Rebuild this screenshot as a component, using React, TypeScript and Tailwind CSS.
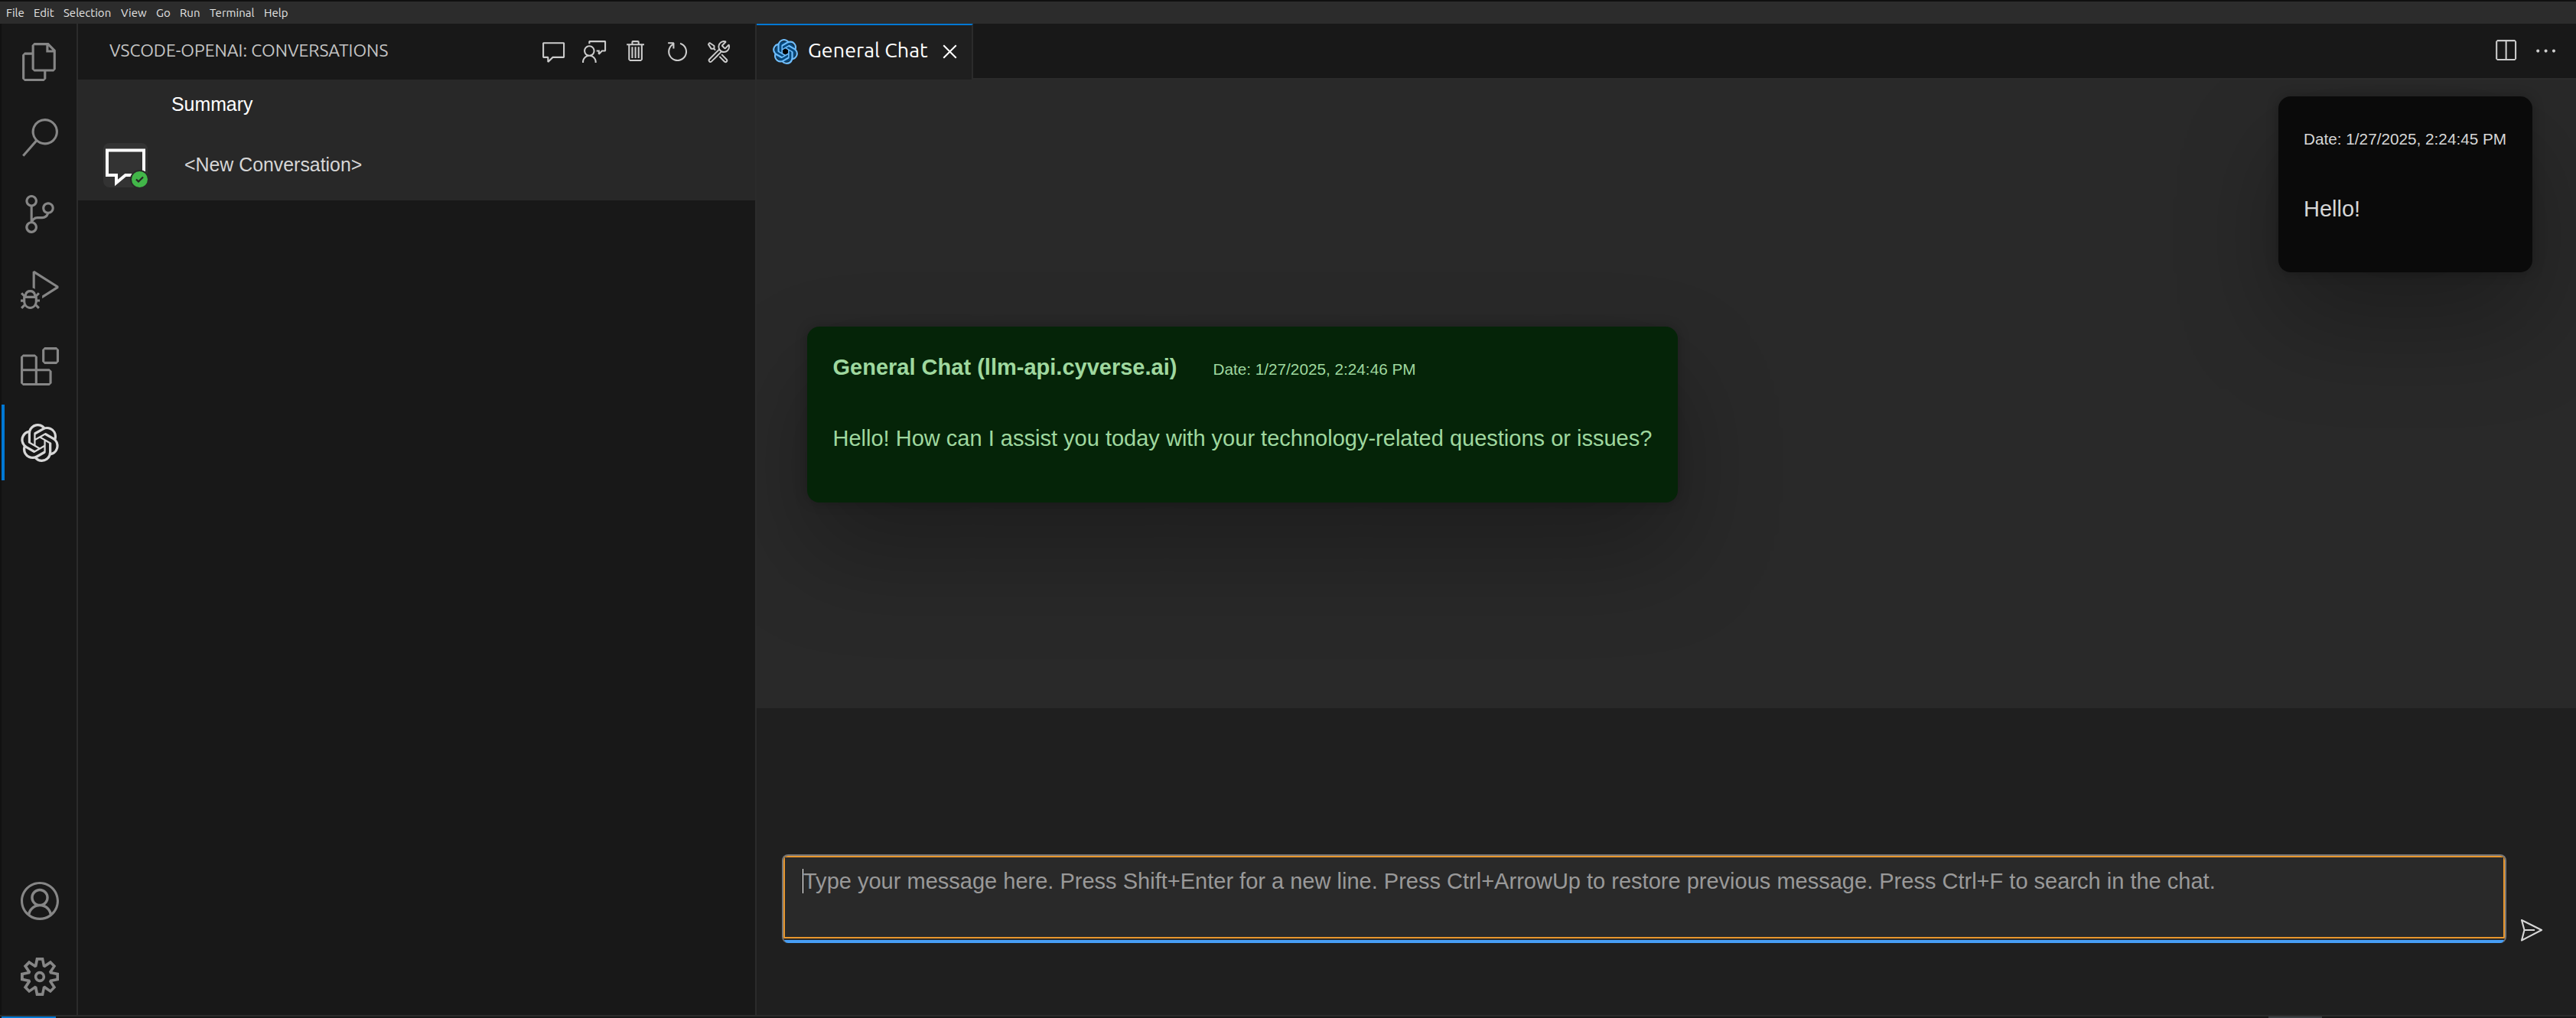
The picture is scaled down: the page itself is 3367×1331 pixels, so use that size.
import React from "react";
import {
  VscFiles, VscSearch, VscSourceControl, VscDebugAlt, VscExtensions, VscAccount, VscSettingsGear,
  VscComment, VscFeedback, VscTrash, VscRefresh, VscTools, VscSplitHorizontal, VscEllipsis, VscClose,
} from "react-icons/vsc";
import { SiOpenai } from "react-icons/si";

const ui = "font-['Ubuntu','Noto_Sans',sans-serif]";

const menus = [
  { label: "File", cls: "w-[36px]" },
  { label: "Edit", cls: "w-[39px]" },
  { label: "Selection", cls: "w-[75px]" },
  { label: "View", cls: "w-[46px]" },
  { label: "Go", cls: "w-[31px]" },
  { label: "Run", cls: "w-[39px]" },
  { label: "Terminal", cls: "w-[71px]" },
  { label: "Help", cls: "w-[40px]" },
];

function MenuBar() {
  return (
    <div className={`flex h-[31px] shrink-0 items-center border-t-2 border-[#101010] bg-[#2c2c2c] pl-2 text-[15px] text-[#e4e4e4] ${ui}`}>
      {menus.map((m) => (
        <div key={m.label} className={`${m.cls} shrink-0 whitespace-nowrap leading-none`}>{m.label}</div>
      ))}
    </div>
  );
}

function ActivityItem({ icon: Icon, active = false }: { icon: React.ElementType; active?: boolean }) {
  return (
    <div className={`flex h-[99.5px] w-full items-center justify-center ${active ? "border-l-4 border-[#0078d4] pr-[2px] pt-[2px] text-[#d7d7d7]" : "pl-[2px] text-[#868686]"}`}>
      <Icon className="size-[50px]" />
    </div>
  );
}

function ActivityBar() {
  return (
    <div className="flex w-[102px] shrink-0 flex-col justify-between border-r-2 border-l-2 border-r-[#2b2b2b] border-l-[#111] bg-[#181818]">
      <div className="flex flex-col">
        <ActivityItem icon={VscFiles} />
        <ActivityItem icon={VscSearch} />
        <ActivityItem icon={VscSourceControl} />
        <ActivityItem icon={VscDebugAlt} />
        <ActivityItem icon={VscExtensions} />
        <ActivityItem icon={SiOpenai} active />
      </div>
      <div className="flex flex-col">
        <ActivityItem icon={VscAccount} />
        <ActivityItem icon={VscSettingsGear} />
      </div>
    </div>
  );
}

function Sidebar() {
  return (
    <div className="flex w-[887px] shrink-0 flex-col border-r-2 border-[#2b2b2b] bg-[#181818]">
      <div className="flex h-[73px] shrink-0 items-center justify-between pr-[31px] pl-[41px]">
        <span className={`pb-[3px] text-[22.8px] whitespace-nowrap text-[#c4c4c4] ${ui}`}>VSCODE-OPENAI: CONVERSATIONS</span>
        <div className="flex items-center gap-[20.8px] text-[33.2px] text-[#cccccc]">
          <VscComment />
          <VscFeedback />
          <VscTrash />
          <VscRefresh />
          <VscTools />
        </div>
      </div>
      <div className="h-[158px] bg-[#282828] font-['Liberation_Sans',Arial,sans-serif] text-[24.88px]">
        <div className="flex h-[66px] items-center pl-[122px] text-white">Summary</div>
        <div className="flex h-[92px] items-center pl-[33px] text-[#d6d6d6]">
          <div className="size-[58px] shrink-0 rounded-lg bg-[#333333]">
            <svg viewBox="0 0 58 58" className="size-full">
              <path d="M5 9.5H53V42H29L17 52V42H5Z" fill="none" stroke="#fff" strokeWidth="4" />
              <circle cx="47.5" cy="47.5" r="12.5" fill="#282828" />
              <circle cx="47.5" cy="47.5" r="10.5" fill="#42b649" />
              <path d="M43 47.5l3 3 6-6" fill="none" stroke="#242424" strokeWidth="2.2" />
            </svg>
          </div>
          <span className="ml-[48px]">&lt;New Conversation&gt;</span>
        </div>
      </div>
    </div>
  );
}

function TabBar() {
  return (
    <div className="flex h-[73px] shrink-0 bg-[#181818]">
      <div className={`flex w-[283px] shrink-0 items-center border-t-2 border-r-2 border-t-[#0078d4] border-r-[#2b2b2b] bg-[#1f1f1f] pb-[2px] pl-[21px] ${ui}`}>
        <div className="flex size-[33px] items-center justify-center">
          <svg viewBox="0 0 33 33" className="absolute size-[33px]">
            <circle cx="16.5" cy="16.5" r="13.5" fill="#07487c" />
            <circle cx="16.5" cy="16.5" r="4" fill="#000" />
          </svg>
          <SiOpenai className="relative size-[33px] text-[#6dbcfb]" />
        </div>
        <span className="ml-[13px] w-[169px] pb-[4px] text-[26.96px] whitespace-nowrap text-white">General Chat</span>
        <VscClose className="size-[33px] text-white" />
      </div>
      <div className="flex flex-1 items-center justify-end gap-[20px] border-b-2 border-[#2b2b2b] pr-[23px] text-[33.2px] text-[#cccccc]">
        <VscSplitHorizontal />
        <VscEllipsis />
      </div>
    </div>
  );
}

const cardShadow = "shadow-[0_0_16px_rgba(0,0,0,0.24),0_66px_132px_rgba(0,0,0,0.28)]";

function Chat() {
  return (
    <div className="flex h-[822px] shrink-0 flex-col overflow-hidden bg-[#292929] pt-[22px] pr-[57px] pl-[66px]">
      <div className={`h-[230px] w-[332px] shrink-0 self-end rounded-2xl bg-[#0a0a0a] px-[33px] text-[#d6d6d6] ${cardShadow}`}>
        <div className="pt-[44px] text-[20.74px] leading-[24px] whitespace-nowrap">Date: 1/27/2025, 2:24:45 PM</div>
        <div className="mt-[62px] text-[29.03px] leading-[34px]">Hello!</div>
      </div>
      <div className={`mt-[71px] h-[230px] w-[1138px] shrink-0 rounded-2xl bg-[#052408] px-[33.5px] text-[#9fd89f] ${cardShadow}`}>
        <div className="flex items-baseline gap-[47px] pt-[36px] whitespace-nowrap">
          <span className="text-[29.03px] leading-[34px] font-bold">General Chat (llm-api.cyverse.ai)</span>
          <span className="text-[20.74px] leading-[24px]">Date: 1/27/2025, 2:24:46 PM</span>
        </div>
        <div className="mt-[59px] text-[29.03px] leading-[34px] whitespace-nowrap">
          Hello! How can I assist you today with your technology-related questions or issues?
        </div>
      </div>
    </div>
  );
}

function Composer() {
  return (
    <div className="flex flex-1 bg-[#1f1f1f] pt-[191px] pl-[33px]">
      <div className="flex h-[116px] w-[2254px] shrink-0 flex-col overflow-hidden rounded-lg border-x-2 border-t-2 border-[#757575] bg-[#292929]">
        <div className="flex h-[108px] shrink-0 border-2 border-[#e8962d] pt-[15px] pl-[23px]">
          <div className="h-8 w-px bg-white" />
          <div className="-mt-px text-[29.03px] leading-[34px] whitespace-nowrap text-[#999999]">
            Type your message here. Press Shift+Enter for a new line. Press Ctrl+ArrowUp to restore previous message. Press Ctrl+F to search in the chat.
          </div>
        </div>
        <div className="mt-[2px] h-1 shrink-0 bg-[#479ef5]" />
      </div>
      <svg viewBox="0 0 30 30" className="mt-[84px] ml-[18px] size-[30px]" fill="none" stroke="#d6d6d6" strokeWidth="2.1">
        <path d="M2 2L28 15L2 28.5L5.5 15Z M5.5 15H19" strokeLinejoin="round" />
      </svg>
    </div>
  );
}

export default function App() {
  return (
    <div className="flex h-[1331px] w-[3367px] flex-col overflow-hidden bg-[#181818] font-['Liberation_Sans',Arial,sans-serif]">
      <MenuBar />
      <div className="flex h-[1296px] shrink-0">
        <ActivityBar />
        <Sidebar />
        <div className="flex min-w-0 flex-1 flex-col">
          <TabBar />
          <Chat />
          <Composer />
        </div>
      </div>
      <div className="h-[2px] shrink-0 bg-[#2b2b2b]" />
      <div className="flex h-[2px] shrink-0 bg-[#181818] pl-[2px]">
        <div className="w-[71px] bg-[#0078d4]" />
        <div className="ml-[2892px] w-[70px] bg-[#3c4043]" />
      </div>
    </div>
  );
}
